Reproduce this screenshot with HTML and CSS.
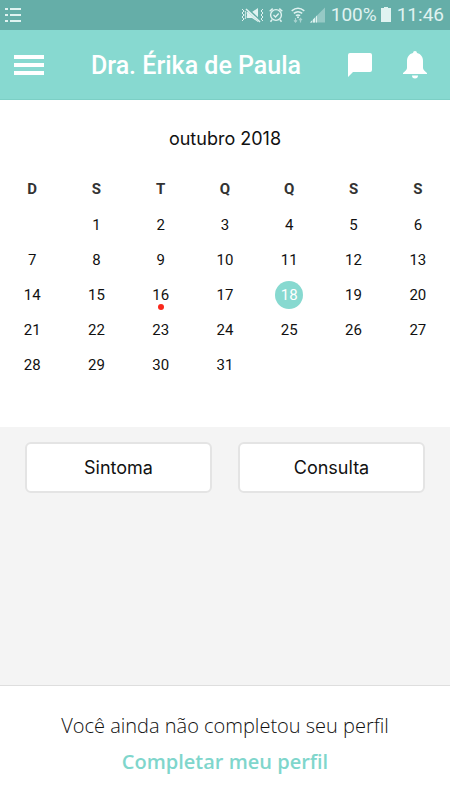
FILE: index.html
```
<!DOCTYPE html>
<html lang="pt-BR">

<head>
  <meta charset="utf-8">
  <meta name="viewport" content="width=device-width, initial-scale=1">
  <title>Dra. Érika de Paula</title>
  <link rel="stylesheet" href="styles.css">
</head>

<body>
  <!-- Device status bar -->
  <div class="status-bar">
    <svg class="status-list" width="16" height="16" viewBox="0 0 16 16">
      <path d="M0 2h3M5 2h11M0 8h3M5 8h11M0 14h3M5 14h11" stroke="currentColor" stroke-width="2" />
    </svg>
    <div class="status-info">
      <svg width="24" height="16" viewBox="0 0 24 16">
        <path d="M1 2l2 2-2 2 2 2-2 2 2 2-2 2M4 4l1 2-1 2 1 2-1 2M22 2l-2 2 2 2-2 2 2 2-2 2 2 2" fill="none" stroke="currentColor" stroke-width="1" />
        <path d="M6 5h5l6-4v14l-6-4H6z" fill="currentColor" />
        <path d="M6 2l14 13" stroke="#65aea8" stroke-width="3" />
        <path d="M5 2l14 13" stroke="currentColor" stroke-width="1.6" />
      </svg>
      <svg class="status-alarm" width="14" height="16" viewBox="0 0 14 16" fill="none" stroke="currentColor">
        <circle cx="7" cy="8" r="5.4" stroke-width="1.4" />
        <path d="M4.5 8l2 2 3.2-3.5" stroke-width="1.3" />
        <path d="M.7 4.2l3-2.6M13.3 4.2l-3-2.6M3 12.8l-1.5 2M11 12.8l1.500 2" stroke-width="1.5" />
      </svg>
      <svg class="status-wifi" width="14" height="16" viewBox="0 0 14 16" fill="none" stroke="currentColor">
        <path d="M.7 3.8q6.3-5 12.6 0M2.8 6.4q4.2-3.4 8.4 0M4.9 8.7q2.1-1.6 4.2 0" stroke-width="1.5" />
        <circle cx="7" cy="10.3" r="1" fill="currentColor" stroke="none" />
        <path d="M4.5 11v4M3 13.3l1.5 1.7L6 13.3M9.5 15.5v-4M8 13.2l1.5-1.7 1.5 1.7" stroke-width="1.2" opacity=".55" />
      </svg>
      <svg class="status-signal" width="15" height="16" viewBox="0 0 15 16" fill="currentColor">
        <path d="M0 15.5L15 .5v15z" opacity=".4" />
        <path d="M0 15.5l2-2v2zM3 15.5v-3l2-2v5zM6 15.5v-6L7 8.500v7z" />
      </svg>
      <span class="status-battery">100%</span>
      <svg class="status-cell" width="10" height="16" viewBox="0 0 10 16" fill="currentColor">
        <path d="M3 0h4v1h3v14H0V1h3z" />
      </svg>
      <span>11:46</span>
    </div>
  </div>

  <!-- App header -->
  <header class="app-header">
    <button class="icon-button" aria-label="Menu">
      <svg width="30" height="20" viewBox="0 0 30 20">
        <path d="M0 2h30M0 10h30M0 18h30" stroke="currentColor" stroke-width="4" />
      </svg>
    </button>
    <h1>Dra. Érika de Paula</h1>
    <div class="header-actions">
      <button class="icon-button" aria-label="Mensagens">
        <svg width="24" height="24" viewBox="0 0 24 24">
          <path d="M2 0h20a2 2 0 0 1 2 2v15a2 2 0 0 1-2 2H5l-5 5V2a2 2 0 0 1 2-2z" fill="currentColor" />
        </svg>
      </button>
      <button class="icon-button" aria-label="Notificações">
        <svg width="24" height="28" viewBox="0 0 24 28">
          <path d="M12 0a2 2 0 0 1 2 2c4 1 6 4 6 8v7c0 2 2 3 4 5v1H0v-1c2-2 4-3 4-5v-7c0-4 2-7 6-8a2 2 0 0 1 2-2zM9 24.500h6a3 3 0 0 1-6 0z" fill="currentColor" />
        </svg>
      </button>
    </div>
  </header>

  <!-- Month calendar -->
  <section class="calendar">
    <h2 id="month">outubro 2018</h2>
    <table aria-labelledby="month">
      <thead>
        <tr><th>D</th><th>S</th><th>T</th><th>Q</th><th>Q</th><th>S</th><th>S</th></tr>
      </thead>
      <tbody>
        <tr><td></td><td>1</td><td>2</td><td>3</td><td>4</td><td>5</td><td>6</td></tr>
        <tr><td>7</td><td>8</td><td>9</td><td>10</td><td>11</td><td>12</td><td>13</td></tr>
        <tr><td>14</td><td>15</td><td><span class="day marked">16</span></td><td>17</td><td><span class="day selected">18</span></td><td>19</td><td>20</td></tr>
        <tr><td>21</td><td>22</td><td>23</td><td>24</td><td>25</td><td>26</td><td>27</td></tr>
        <tr><td>28</td><td>29</td><td>30</td><td>31</td><td></td><td></td><td></td></tr>
      </tbody>
    </table>
  </section>

  <!-- Actions for the selected day -->
  <main class="actions">
    <button class="action-button">Sintoma</button>
    <button class="action-button">Consulta</button>
  </main>

  <!-- Profile reminder -->
  <footer class="profile">
    <p>Você ainda não completou seu perfil</p>
    <a href="#">Completar meu perfil</a>
  </footer>
</body>

</html>
```
FILE: styles.css
```
* {
  box-sizing: border-box;
}

body {
  margin: 0;
  min-height: 100vh;
  display: flex;
  flex-direction: column;
  background-color: #f4f4f4;
  color: #111;
  font-family: Roboto, sans-serif;
}

svg {
  display: block;
}

button {
  font-family: inherit;
  cursor: pointer;
}

.status-bar {
  height: 30px;
  padding: 0 6px 0 5px;
  display: flex;
  justify-content: space-between;
  align-items: center;
  background-color: #65aea8;
  color: #e0f3f1;
  font-size: 19px;
  line-height: 30px;
}

.status-info {
  display: flex;
  align-items: center;
}

.status-alarm {
  margin-left: 4px;
}

.status-wifi {
  margin-left: 8px;
}

.status-signal {
  margin-left: 5px;
}

.status-battery {
  margin-left: 6px;
}

.status-cell {
  margin: 0 6px 0 4px;
}

.app-header {
  height: 70px;
  padding: 0 23px 0 14px;
  display: flex;
  justify-content: space-between;
  align-items: center;
  background-color: #87d9d0;
  border-bottom: 1px solid #7ccfc5;
  color: #fff;
}

.app-header h1 {
  margin: 0;
  padding-top: 3px;
  font-size: 25px;
  font-weight: 500;
  line-height: 30px;
}

.icon-button {
  padding: 0;
  border: none;
  background: none;
  color: #fff;
}

.header-actions {
  display: flex;
  align-items: center;
  gap: 31px;
}

.calendar {
  padding: 24px 0 45px;
  background-color: #fff;
  text-align: center;
}

.calendar h2 {
  margin: 0 0 17px;
  font-family: Inter, sans-serif;
  font-size: 18px;
  font-weight: 400;
  line-height: 30px;
}

.calendar table {
  width: 100%;
  table-layout: fixed;
  border-collapse: collapse;
  font-size: 15px;
}

.calendar th {
  height: 36px;
  padding: 0;
  color: #333;
}

.calendar td {
  height: 35px;
  padding: 0;
}

.day {
  display: block;
  position: relative;
  width: 28px;
  margin: 0 auto;
  line-height: 28px;
}

.selected {
  border-radius: 50%;
  background-color: #87d9d0;
  color: #fff;
}

.marked::after {
  content: "";
  position: absolute;
  left: 11px;
  bottom: -1px;
  width: 6px;
  height: 6px;
  border-radius: 50%;
  background-color: #f9281c;
}

.actions {
  flex: 1;
  display: flex;
  align-items: flex-start;
  gap: 26px;
  padding: 15px 25px;
}

.action-button {
  flex: 1;
  height: 51px;
  padding: 0;
  border: 2px solid #e4e4e4;
  border-radius: 6px;
  background-color: #fff;
  color: #111;
  font-family: Inter, sans-serif;
  font-size: 18px;
}

.profile {
  padding: 22px 0 20px;
  border-top: 1px solid #dedede;
  background-color: #fff;
  font-family: "Open Sans", sans-serif;
  font-size: 20px;
  line-height: 36px;
  text-align: center;
}

.profile p {
  margin: 0;
  font-weight: 300;
}

.profile a {
  color: #7fd6cc;
  font-weight: 600;
  text-decoration: none;
}
```
